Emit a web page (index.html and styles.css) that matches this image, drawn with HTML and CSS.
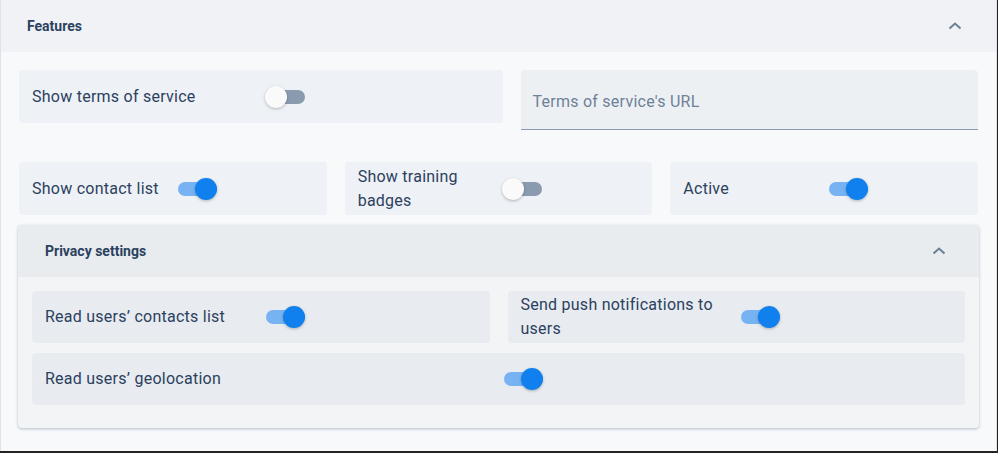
FILE: index.html
```html
<!DOCTYPE html>
<html>
<head>
<meta charset="utf-8">
<link rel="stylesheet" href="styles.css">
</head>
<body>
<div class="frame">
  <div class="section-header">
    <span class="section-title">Features</span>
    <svg class="chevron" width="14" height="10" viewBox="0 0 14 10"><path d="M1.5 7.5 L7 2.5 L12.5 7.5" fill="none" stroke="#6b7f96" stroke-width="2"/></svg>
  </div>
  <div class="section-body">
    <div class="row row-first">
      <div class="card">
        <span class="label">Show terms of service</span>
        <span class="switch"><span class="track"></span><span class="thumb"></span></span>
      </div>
      <div class="field">
        <span class="placeholder">Terms of service's URL</span>
      </div>
    </div>
    <div class="row row-three">
      <div class="card">
        <span class="label">Show contact list</span>
        <span class="switch on"><span class="track"></span><span class="thumb"></span></span>
      </div>
      <div class="card">
        <span class="label">Show training badges</span>
        <span class="switch"><span class="track"></span><span class="thumb"></span></span>
      </div>
      <div class="card">
        <span class="label">Active</span>
        <span class="switch on"><span class="track"></span><span class="thumb"></span></span>
      </div>
    </div>
    <div class="panel">
      <div class="panel-header">
        <span class="section-title">Privacy settings</span>
        <svg class="chevron" width="14" height="10" viewBox="0 0 14 10"><path d="M1.5 7.5 L7 2.5 L12.5 7.5" fill="none" stroke="#6b7f96" stroke-width="2"/></svg>
      </div>
      <div class="panel-body">
        <div class="row row-two">
          <div class="card dark">
            <span class="label">Read users’ contacts list</span>
            <span class="switch on"><span class="track"></span><span class="thumb"></span></span>
          </div>
          <div class="card dark">
            <span class="label">Send push notifications to users</span>
            <span class="switch on"><span class="track"></span><span class="thumb"></span></span>
          </div>
        </div>
        <div class="card dark">
          <span class="label">Read users’ geolocation</span>
          <span class="switch on"><span class="track"></span><span class="thumb"></span></span>
        </div>
      </div>
    </div>
  </div>
</div>
</body>
</html>
```

FILE: styles.css
```css
html, body {
  margin: 0;
  padding: 0;
  background: #222;
}
body {
  font-family: Roboto, "Liberation Sans", sans-serif;
  color: #2b4160;
  width: 998px;
}
.frame {
  width: 995px;
  border-left: 1px solid #dde3ea;
  border-right: 1px solid #dde3ea;
  background: #f7f9fb;
  height: 451px;
  overflow: hidden;
}
.section-header {
  height: 52px;
  background: #f0f2f5;
  display: flex;
  align-items: center;
  justify-content: space-between;
  padding: 0 34px 0 26px;
}
.section-title {
  font-size: 14px;
  font-weight: 700;
  color: #2b4160;
}
.chevron {
  display: block;
}
.section-body {
  padding: 18px 18px 0 18px;
}
.row {
  display: grid;
  gap: 18px;
}
.row-first {
  grid-template-columns: 483fr 457fr;
  align-items: start;
  margin-bottom: 32px;
}
.row-three {
  grid-template-columns: 1fr 1fr 1fr;
  margin-bottom: 10px;
}
.row-two {
  grid-template-columns: 1fr 1fr;
}
.card {
  height: 53px;
  box-sizing: border-box;
  background: #eef1f5;
  border-radius: 4px;
  padding: 0 13px;
  display: grid;
  grid-template-columns: 1fr 1fr;
  align-items: center;
}
.card.dark {
  background: #e8ebef;
  height: 52px;
}
.label {
  font-size: 16px;
  line-height: 24px;
  letter-spacing: 0.25px;
  color: #2b4160;
}
.field {
  height: 60px;
  box-sizing: border-box;
  background: #edf0f3;
  border-bottom: 1px solid #8a9bb0;
  border-radius: 4px 4px 0 0;
  padding: 0 13px 0 12px;
  display: flex;
  align-items: center;
}
.placeholder {
  font-size: 16px;
  letter-spacing: 0.25px;
  color: #6e8197;
  padding-top: 3px;
}
.switch {
  position: relative;
  display: block;
  width: 39px;
  height: 14px;
  margin-left: 5px;
}
.track {
  position: absolute;
  left: 2px;
  right: 0;
  top: 0;
  height: 14px;
  border-radius: 7px;
  background: #8a9bb0;
}
.thumb {
  position: absolute;
  left: -1px;
  top: -4px;
  width: 22px;
  height: 22px;
  border-radius: 50%;
  background: #fafafa;
  box-shadow: 0 1px 3px rgba(0,0,0,0.25);
}
.switch.on .track {
  left: 0;
  background: #77b3f3;
}
.switch.on .thumb {
  left: 17px;
  background: #0f80ee;
}
.panel {
  margin: 0 -1px;
  border-radius: 4px;
  background: #f2f4f6;
  box-shadow: 0 1px 3px rgba(60,80,110,0.35);
  overflow: hidden;
}
.panel-header {
  height: 52px;
  background: #e9ecef;
  display: flex;
  align-items: center;
  justify-content: space-between;
  padding: 0 33px 0 27px;
}
.panel-body {
  padding: 14px 14px 23px 14px;
  display: flex;
  flex-direction: column;
  gap: 10px;
}
```
